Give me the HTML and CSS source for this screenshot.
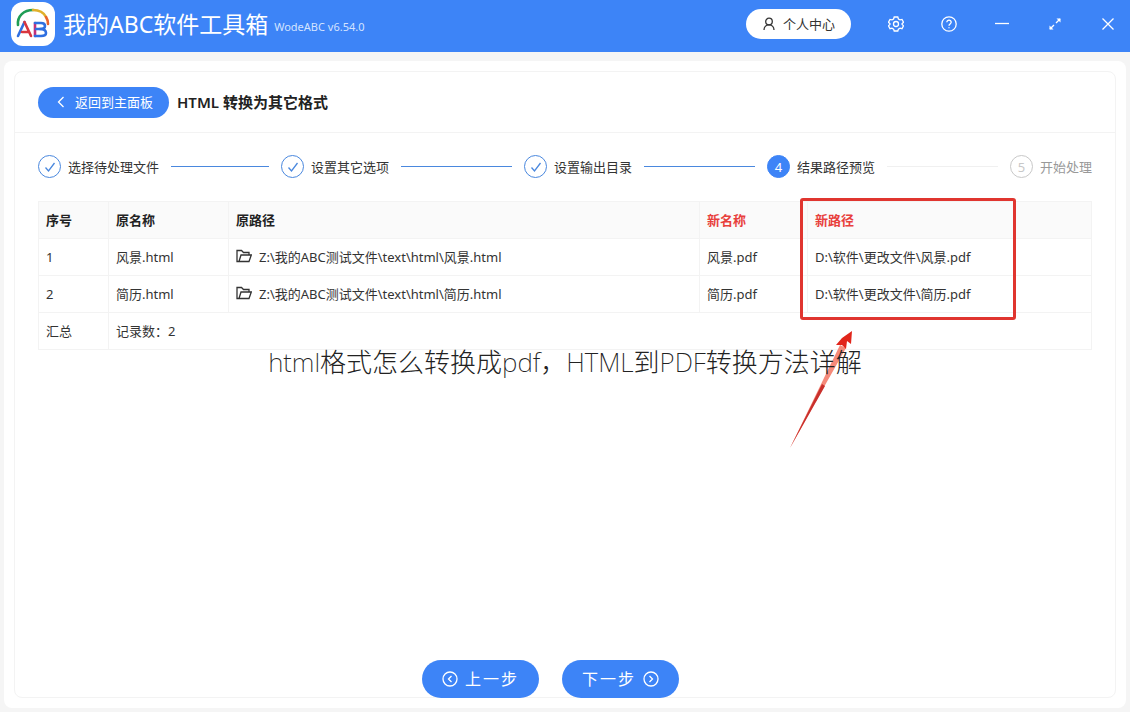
FILE: index.html
```
<!DOCTYPE html>
<html lang="zh-CN">
<head>
<meta charset="UTF-8">
<meta name="viewport" content="width=device-width, initial-scale=1.0">
<title>我的ABC软件工具箱</title>
<link rel="stylesheet" href="styles.css">
</head>
<body>
  <header class="topbar">
    <svg class="logo" viewBox="0 0 44 44" fill="none" stroke-linecap="round">
      <rect width="44" height="44" rx="12" fill="#fff"/>
      <g stroke-width="2.600">
        <path d="M7 23C6 14 13 8 22 8" stroke="#1f9d55"/>
        <path d="M22 8C28 8 33 11 35 15" stroke="#e0b02b"/>
        <path d="M35 15Q37 18 37 22" stroke="#e8622c"/>
        <path d="M7 34L13.500 20" stroke="#2f6fe0"/>
        <path d="M13.500 20L20 34M11 30H17" stroke="#d9363e"/>
        <path d="M24 21V34" stroke="#c2307a"/>
        <path d="M24 21H30Q34 21 34 24Q34 27 29 27H25" stroke="#2f6fe0"/>
        <path d="M29 27Q35 27 35 31Q35 34 30 34H24" stroke="#2f6fe0"/>
      </g>
    </svg>
    <h1 class="app-name">我的ABC软件工具箱</h1>
    <span class="version">WodeABC v6.54.0</span>

    <div class="topbar-actions">
      <button class="user-btn">
        <svg class="icon" viewBox="0 0 14 14"><circle cx="7" cy="4.500" r="3.300"/><path d="M2 13C2 9.800 4.200 7.800 7 7.800S12 9.800 12 13"/></svg>
        个人中心
      </button>
      <button class="icon-btn" aria-label="设置">
        <svg class="icon-lg" viewBox="0 0 16 16"><path d="M6.200 1H9.800L10.400 3L12 3.900L14 3.400L15.500 6.300L14 7.800V8.300L15.500 9.800L14 12.700L12 12.200L10.400 13.100L9.800 15H6.200L5.600 13.100L4 12.200L2 12.700L.5 9.800L2 8.300V7.800L.5 6.300L2 3.400L4 3.900L5.600 3Z"/><circle cx="8" cy="8" r="2.500"/></svg>
      </button>
      <button class="icon-btn" aria-label="帮助">
        <svg class="icon-lg" viewBox="0 0 16 16"><circle cx="8" cy="8" r="7.200"/><path d="M5.800 6.300C5.800 3.400 10.300 3.500 10.200 6.300C10.100 8 8 7.900 8 9.700M8 11.200V12.300"/></svg>
      </button>
      <button class="icon-btn" aria-label="最小化">
        <svg class="icon-lg" viewBox="0 0 16 16"><path d="M1 7.500H15"/></svg>
      </button>
      <button class="icon-btn" aria-label="最大化">
        <svg class="icon-lg" viewBox="0 0 16 16"><path d="M9 7L13 3M3 13L7 9"/><path class="solid" d="M9.500 2.500H13.500V6.500ZM2.500 9.500V13.500H6.500Z"/></svg>
      </button>
      <button class="icon-btn" aria-label="关闭">
        <svg class="icon-lg" viewBox="0 0 16 16"><path d="M2.500 2.500L13.500 13.500M13.500 2.500L2.500 13.500"/></svg>
      </button>
    </div>
  </header>

  <main class="panel">
    <section class="card">
      <div class="card-header">
        <button class="btn back-btn">
          <svg class="icon" viewBox="0 0 14 14"><path d="M9.500 2L4.500 7L9.500 12"/></svg>
          返回到主面板
        </button>
        <h2 class="card-title">HTML 转换为其它格式</h2>
      </div>

      <ol class="steps">
        <li class="step done">
          <span class="step-icon"><svg class="icon" viewBox="0 0 14 14"><path d="M2.500 7.500L5.500 11L11.500 3"/></svg></span>
          <span class="step-title">选择待处理文件</span>
        </li>
        <li class="step done">
          <span class="step-icon"><svg class="icon" viewBox="0 0 14 14"><path d="M2.500 7.500L5.500 11L11.500 3"/></svg></span>
          <span class="step-title">设置其它选项</span>
        </li>
        <li class="step done">
          <span class="step-icon"><svg class="icon" viewBox="0 0 14 14"><path d="M2.500 7.500L5.500 11L11.500 3"/></svg></span>
          <span class="step-title">设置输出目录</span>
        </li>
        <li class="step active">
          <span class="step-icon">4</span>
          <span class="step-title">结果路径预览</span>
        </li>
        <li class="step wait">
          <span class="step-icon">5</span>
          <span class="step-title">开始处理</span>
        </li>
      </ol>

      <table class="file-table">
        <colgroup>
          <col class="col-index">
          <col class="col-name">
          <col class="col-path">
          <col class="col-new-name">
          <col class="col-new-path">
        </colgroup>
        <thead>
          <tr>
            <th>序号</th>
            <th>原名称</th>
            <th>原路径</th>
            <th class="changed">新名称</th>
            <th class="changed marked">
              新路径
              <span class="mark-box"></span>
              <svg class="mark-arrow" viewBox="0 0 64 118">
                <path d="M0 117L50 14L56 17L34 56Z" fill="#f58a7a"/>
                <path d="M0 117L32 53L35 55Z" fill="#c9302c"/>
                <path d="M52 7L62 0L61 13L57 10L56 18L52 14L46 14Z" fill="#e1251b"/>
              </svg>
            </th>
          </tr>
        </thead>
        <tbody>
          <tr>
            <td>1</td>
            <td>风景.html</td>
            <td><svg class="folder" viewBox="0 0 16 14"><path d="M3 12.500H1V1.500H5.500L7.500 3.500H13V6M3 12.500L5 6H15.300L13 12.500Z"/></svg>Z:\我的ABC测试文件\text\html\风景.html</td>
            <td>风景.pdf</td>
            <td>D:\软件\更改文件\风景.pdf</td>
          </tr>
          <tr>
            <td>2</td>
            <td>简历.html</td>
            <td><svg class="folder" viewBox="0 0 16 14"><path d="M3 12.500H1V1.500H5.500L7.500 3.500H13V6M3 12.500L5 6H15.300L13 12.500Z"/></svg>Z:\我的ABC测试文件\text\html\简历.html</td>
            <td>简历.pdf</td>
            <td>D:\软件\更改文件\简历.pdf</td>
          </tr>
        </tbody>
        <tfoot>
          <tr>
            <td>汇总</td>
            <td colspan="4">记录数：2</td>
          </tr>
        </tfoot>
      </table>

      <div class="card-footer">
        <button class="btn step-btn">
          <svg class="icon-lg" viewBox="0 0 16 16"><circle cx="8" cy="8" r="7"/><path d="M9.500 5L6.500 8L9.500 11"/></svg>
          上一步
        </button>
        <button class="btn step-btn">
          下一步
          <svg class="icon-lg" viewBox="0 0 16 16"><circle cx="8" cy="8" r="7"/><path d="M6.500 5L9.500 8L6.500 11"/></svg>
        </button>
      </div>
    </section>
  </main>

  <p class="caption">html格式怎么转换成pdf，HTML到PDF转换方法详解</p>
</body>
</html>
```
FILE: styles.css
```
* {
  margin: 0;
  padding: 0;
  box-sizing: border-box;
}

body {
  font-family: "Noto Sans", "Noto Sans CJK SC", sans-serif;
  font-size: 13px;
  line-height: 20px;
  color: #333;
  background-color: #f5f5f5;
  min-height: 100vh;
  display: flex;
  flex-direction: column;
  position: relative;
}

button {
  font: inherit;
  border: none;
  cursor: pointer;
}

svg {
  fill: none;
  stroke: currentColor;
  flex: none;
}

.icon {
  width: 14px;
  height: 14px;
  stroke-width: 1.3;
}

.icon-lg {
  width: 16px;
  height: 16px;
  stroke-width: 1.3;
}

/* Title bar */
.topbar {
  display: flex;
  align-items: center;
  height: 52px;
  padding: 0 14px 5px 11px;
  background-color: #3d84f7;
  color: #fff;
}

.logo {
  width: 44px;
  height: 44px;
  stroke: none;
}

.app-name {
  margin-left: 8px;
  font-size: 23px;
  font-weight: 400;
  line-height: 32px;
}

.version {
  margin: 6px 0 0 6px;
  font-size: 11px;
  color: #d3e3ff;
}

.topbar-actions {
  display: flex;
  align-items: center;
  gap: 37px;
  margin-left: auto;
}

.user-btn {
  display: flex;
  align-items: center;
  gap: 7px;
  height: 30px;
  padding: 0 16px;
  border-radius: 15px;
  background-color: #fff;
  color: #333;
}

.icon-btn {
  display: flex;
  background: none;
  color: #fff;
}

.solid {
  fill: currentColor;
  stroke: none;
}

/* Content panel */
.panel {
  flex: 1;
  display: flex;
  margin: 9px 4px 4px;
  padding: 10px;
  border-radius: 8px;
  background-color: #fff;
}

.card {
  flex: 1;
  display: flex;
  flex-direction: column;
  min-width: 0;
  border: 1px solid #f3f3f3;
  border-radius: 8px;
}

.card-header {
  display: flex;
  align-items: center;
  gap: 8px;
  height: 61px;
  padding: 0 23px;
  border-bottom: 1px solid #f3f3f3;
}

.btn {
  display: flex;
  align-items: center;
  justify-content: center;
  background-color: #3d84f7;
  color: #fff;
}

.back-btn {
  gap: 7px;
  height: 31px;
  padding: 0 16px;
  border-radius: 16px;
}

.card-title {
  font-size: 15px;
  font-weight: 600;
  color: #222;
}

/* Steps */
.steps {
  display: flex;
  gap: 12px;
  padding: 22px 23px 0;
  list-style: none;
}

.step {
  flex: 1;
  display: flex;
  align-items: center;
  gap: 7px;
  white-space: nowrap;
}

.step:last-child {
  flex: none;
}

.step:not(:last-child)::after {
  content: '';
  flex: 1;
  height: 1px;
  margin-left: 5px;
  background-color: #4a88de;
}

.step-icon {
  display: flex;
  align-items: center;
  justify-content: center;
  width: 23px;
  height: 23px;
  border: 1px solid #4a88de;
  border-radius: 50%;
  color: #4a88de;
}

.step.active .step-icon {
  border-color: #3d84f7;
  background-color: #3d84f7;
  color: #fff;
}

.step.active::after {
  background-color: #f0f0f0;
}

.step.wait {
  color: #999;
}

.step.wait .step-icon {
  border-color: #c8c8c8;
  color: #c8c8c8;
}

/* File table */
.file-table {
  margin: 23px 23px 0;
  table-layout: fixed;
  border-collapse: separate;
  border-spacing: 0;
  border-top: 1px solid #f3f3f3;
  border-left: 1px solid #f3f3f3;
}

.col-index {
  width: 70px;
}

.col-name {
  width: 120px;
}

.col-path {
  width: 471px;
}

.col-new-name {
  width: 108px;
}

.file-table th,
.file-table td {
  height: 37px;
  padding: 0 7px;
  border-right: 1px solid #f3f3f3;
  border-bottom: 1px solid #f3f3f3;
  text-align: left;
  white-space: nowrap;
}

.file-table th {
  background-color: #fafafa;
  font-weight: 600;
  color: #222;
}

.file-table th.changed {
  color: #e8403c;
}

.folder {
  width: 16px;
  height: 14px;
  margin-right: 7px;
  vertical-align: -1px;
  stroke-width: 1.3;
}

/* Red marker around the new path column */
.marked {
  position: relative;
}

.mark-box {
  position: absolute;
  top: -4px;
  left: -8px;
  width: 216px;
  height: 122px;
  border: 3px solid #e0352f;
  border-radius: 3px;
}

.mark-arrow {
  position: absolute;
  top: 129px;
  left: -18px;
  width: 64px;
  height: 118px;
  stroke: none;
}

.card-footer {
  display: flex;
  justify-content: center;
  gap: 23px;
  margin: auto 29px -1px 0;
}

.step-btn {
  gap: 7px;
  width: 117px;
  height: 38px;
  border-radius: 19px;
  font-size: 16px;
  letter-spacing: 2px;
}

.caption {
  position: absolute;
  top: 344px;
  left: 0;
  right: 0;
  font-size: 26px;
  font-weight: 200;
  line-height: 36px;
  text-align: center;
  color: #222;
  pointer-events: none;
}
```
